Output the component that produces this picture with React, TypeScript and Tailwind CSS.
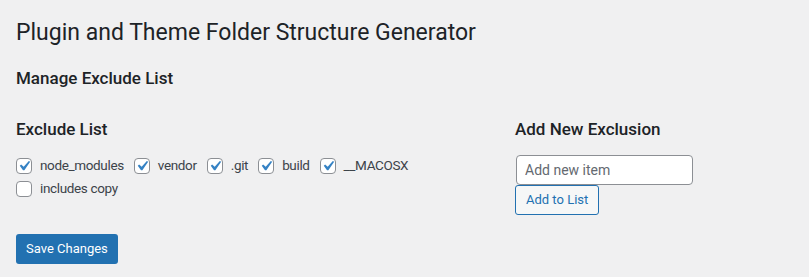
import React from "react";

const Check = () => (
  <svg viewBox="0 0 20 20" className="absolute left-[-3px] top-[-3px] w-[20px] h-[20px]">
    <path d="M14.83 4.89l1.34.94-5.81 8.38H9.02L5.78 9.67l1.34-1.25 2.57 2.4z" fill="#3582c4" />
  </svg>
);

function Box({ label, checked }: { label: string; checked: boolean }) {
  return (
    <label className="flex items-center gap-[8px] text-[13.5px] tracking-[-0.35px] leading-[23px] text-[#3c434a]">
      <span className="relative w-[16px] h-[16px] rounded-[4px] border border-[#8c8f94] bg-white shrink-0">
        {checked && <Check />}
      </span>
      <span>{label}</span>
    </label>
  );
}

export default function App() {
  const items = ["node_modules", "vendor", ".git", "build", "__MACOSX"];
  return (
    <div
      className="min-h-[277px] bg-[#f0f0f1] pl-[16px] pt-[18px] text-[#1d2327]"
      style={{ fontFamily: 'Roboto, "Noto Sans", sans-serif' }}
    >
      <h1 className="text-[23px] leading-[30px] font-normal">Plugin and Theme Folder Structure Generator</h1>
      <h2 className="mt-[19px] text-[17px] leading-[22px] font-medium">Manage Exclude List</h2>
      <div className="mt-[29px] flex">
        <div className="w-[499px]">
          <h3 className="text-[17px] leading-[22px] font-medium">Exclude List</h3>
          <div className="mt-[14px] flex flex-wrap gap-x-[10px]">
            {items.map((i) => (
              <Box key={i} label={i} checked />
            ))}
          </div>
          <div className="flex">
            <Box label="includes copy" checked={false} />
          </div>
        </div>
        <div>
          <h3 className="text-[17px] leading-[22px] font-medium">Add New Exclusion</h3>
          <div className="mt-[15px] flex flex-col items-start">
            <input
              placeholder="Add new item"
              className="ml-[1px] w-[177px] h-[30px] rounded-[4px] border border-[#8c8f94] bg-white px-[8px] text-[14px] text-[#2c3338] placeholder:text-[#646970] outline-none"
            />
            <button className="h-[30px] px-[10px] rounded-[3px] border border-[#2271b1] bg-[#f6f7f7] text-[13px] text-[#2271b1]">
              Add to List
            </button>
          </div>
        </div>
      </div>
      <button className="mt-[19px] h-[30px] px-[10px] rounded-[3px] bg-[#2271b1] text-[13px] text-white">
        Save Changes
      </button>
    </div>
  );
}
